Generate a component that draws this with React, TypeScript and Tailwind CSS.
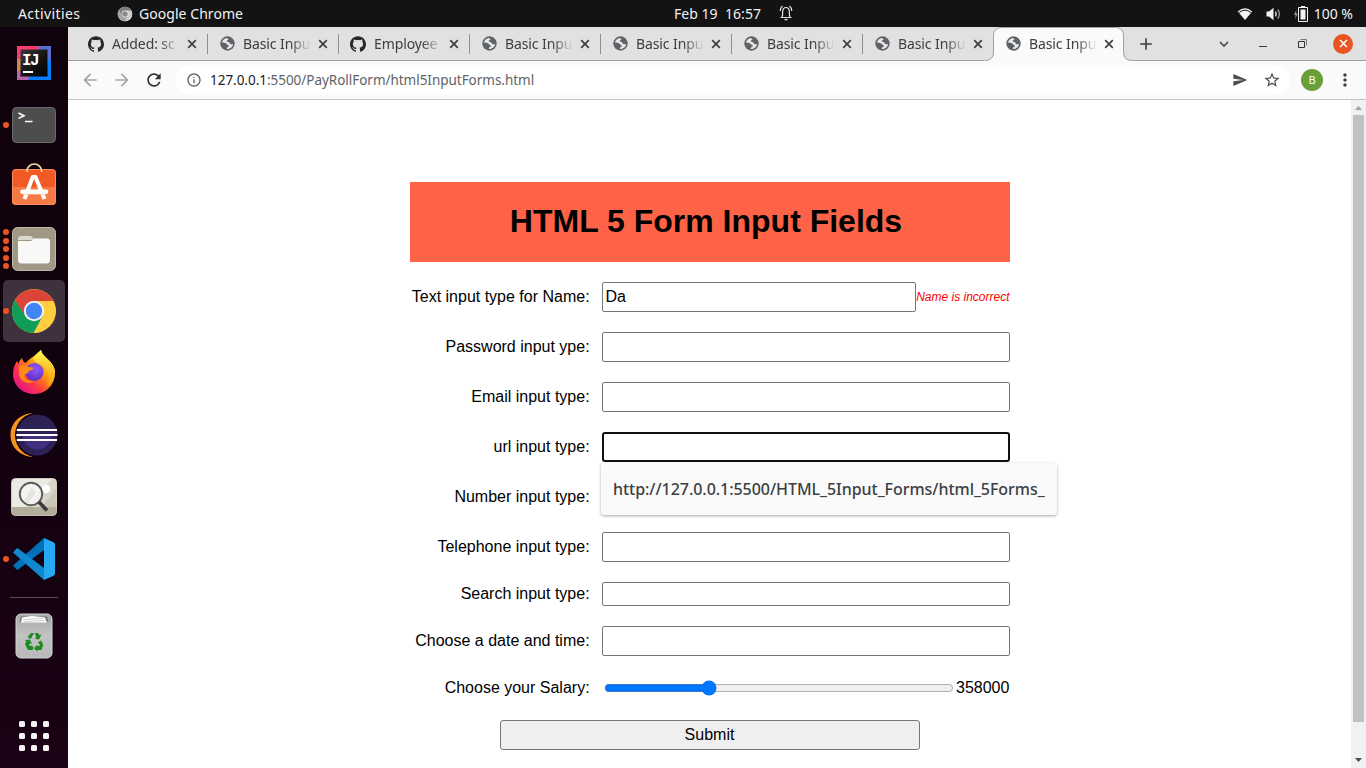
import React from 'react';
import { SiGithub } from 'react-icons/si';
import {
  MdAdd,
  MdArrowBack,
  MdArrowForward,
  MdExpandMore,
  MdInfoOutline,
  MdMoreVert,
  MdRefresh,
  MdSend,
  MdStarBorder,
} from 'react-icons/md';

const uiFont = "font-['Noto_Sans','Open_Sans',sans-serif]";
const formFont = "font-['Liberation_Sans',Arial,sans-serif]";

function ChromeGlyph({ mono = false }: { mono?: boolean }) {
  const c = mono
    ? { r: '#7d7d7d', y: '#cfcfcf', g: '#a4a4a4', b: '#8a8a8a', w: '#e8e8e8' }
    : { r: '#db4437', y: '#ffcd40', g: '#0f9d58', b: '#4285f4', w: '#f1f1f1' };
  return (
    <g>
      <circle cx="24" cy="24" r="22" fill={c.y} />
      <path d="M4.95 13 A22 22 0 0 1 43.05 13.5 L43 14 H24 L14.5 29.5 Z" fill={c.r} />
      <path d="M43.05 14 A22 22 0 0 1 24 46 L33 29 L24 14 Z" fill={c.y} />
      <path d="M4.95 13 A22 22 0 0 0 23.5 46 L32.7 29 L24 34 L15.3 29 Z" fill={c.g} />
      <circle cx="24" cy="24" r="10.2" fill={c.w} />
      <circle cx="24" cy="24" r="8.2" fill={c.b} />
    </g>
  );
}

function CrossIcon({ className }: { className: string }) {
  return (
    <svg className={className} width="10" height="10" viewBox="0 0 10 10" fill="none" stroke="currentColor" strokeWidth="1.700">
      <path d="M1.200 1.200 L8.800 8.800 M8.800 1.200 L1.200 8.800" />
    </svg>
  );
}

function GlobeIcon() {
  return (
    <svg className="relative ml-px shrink-0" width="15" height="15" viewBox="0 0 15 15">
      <circle cx="7.500" cy="7.500" r="7.200" fill="#5f6368" />
      <path
        d="M7 1.900 C4.500 2.100 2.300 4 1.900 6.600 C3.200 7 5 6.800 6.200 7.500 C7.500 8 7.200 9.300 8.800 9.400 C9.300 10.200 8.600 10.800 7.600 10.900 C7 11.200 7.200 12.200 6.600 13.100 C9.800 13.300 12.600 11 13.100 8.200 C12 8.300 10.800 8.500 10 7.800 C9.300 7.200 9.700 6.200 8.300 6 C7 6 6.600 5.400 6.900 4.600 C7.300 3.900 8.500 4.200 8.400 3.200 C8.300 2.500 7.500 2.600 7 1.900 Z"
        fill="#e8e8e8"
      />
    </svg>
  );
}

function IdeaIcon() {
  return (
    <svg width="48" height="48" viewBox="0 0 48 48">
      <rect x="7" y="7" width="34" height="34" fill="#8d63c0" />
      <path d="M7 7 H30 L22 24 L7 24 Z" fill="#fe3b6e" />
      <path d="M7 20 L16 20 L14 41 H7 Z" fill="#cf8a4c" />
      <path d="M7 33 L14 29 L20 41 H7 Z" fill="#b765ae" />
      <path d="M28 7 H41 V24 L33 20 Z" fill="#5b6fd0" />
      <path d="M41 20 V41 H18 L22 34 Z" fill="#087cfa" />
      <rect x="10.500" y="10.500" width="27" height="27" fill="url(#idea)" />
      <defs>
        <linearGradient id="idea" x1="0" y1="0" x2="1" y2="1">
          <stop offset="0" stopColor="#3a3a3a" />
          <stop offset=".6" stopColor="#111" />
          <stop offset="1" stopColor="#000" />
        </linearGradient>
      </defs>
      <text x="12" y="26" fill="#fff" fontSize="16" fontWeight="700" fontFamily="Liberation Mono" letterSpacing="-1.6">IJ</text>
      <rect x="13" y="32" width="10" height="2" fill="#fff" />
    </svg>
  );
}

function TerminalIcon() {
  return (
    <svg width="48" height="48" viewBox="0 0 48 48">
      <rect x="2.500" y="6.500" width="43" height="35" rx="4" fill="#4d4d4d" stroke="#6c6c6c" />
      <path d="M8.500 12 L14 14.700 L8.500 17.400" fill="none" stroke="#fff" strokeWidth="1.600" />
      <path d="M15 20.500 H22.500" stroke="#fff" strokeWidth="1.500" />
    </svg>
  );
}

function SoftwareIcon() {
  return (
    <svg width="48" height="48" viewBox="0 0 48 48">
      <rect x="2" y="6" width="44" height="36" rx="4" fill="#f15a24" />
      <path d="M2 24 H46 V38 a4 4 0 0 1 -4 4 H6 a4 4 0 0 1 -4 -4 Z" fill="#f47b45" />
      <rect x="2.500" y="6.500" width="43" height="35" rx="4" fill="none" stroke="#f58d60" />
      <path d="M17 9 V8 a7.300 7 0 0 1 14.600 0 V9" fill="none" stroke="#f9dca4" strokeWidth="1.600" />
      <path d="M14.500 36 L22.700 14 H25.500 L34.500 36" fill="none" stroke="#fff" strokeWidth="4" strokeLinejoin="round" />
      <path d="M12.500 28.700 H36" stroke="#fff" strokeWidth="4.600" strokeLinecap="round" />
      <path d="M13 31.300 H36" stroke="#f8c4ab" strokeWidth=".8" />
    </svg>
  );
}

function FilesIcon() {
  return (
    <svg width="48" height="48" viewBox="0 0 48 48">
      <rect x="2.500" y="2.500" width="43" height="43" rx="5" fill="#a09885" stroke="#beb8a7" />
      <path d="M8 14 a3 3 0 0 1 3 -3 H20 q2 0 3 2 L24 15 H8 Z" fill="#dcd8cb" />
      <path d="M8 16 H21 L24 13.500 H37 a3 3 0 0 1 3 3 V35 a3.500 3.500 0 0 1 -3.500 3.500 H11.500 A3.500 3.500 0 0 1 8 35 Z" fill="#f8f8f6" />
    </svg>
  );
}

function ChromeIcon() {
  return (
    <svg width="48" height="48" viewBox="0 0 48 48">
      <ChromeGlyph />
    </svg>
  );
}

function FirefoxIcon() {
  return (
    <svg width="48" height="48" viewBox="0 0 48 48">
      <defs>
        <linearGradient id="ffBody" x1=".9" y1=".1" x2=".15" y2=".9">
          <stop offset="0" stopColor="#fff44f" />
          <stop offset=".4" stopColor="#ff980e" />
          <stop offset=".7" stopColor="#ff3647" />
          <stop offset="1" stopColor="#e31587" />
        </linearGradient>
        <linearGradient id="ffTail" x1=".5" y1="0" x2=".5" y2="1">
          <stop offset="0" stopColor="#fff44f" />
          <stop offset="1" stopColor="#ff980e" />
        </linearGradient>
        <radialGradient id="ffGlobe" cx=".6" cy=".3" r=".8">
          <stop offset="0" stopColor="#9059ff" />
          <stop offset="1" stopColor="#5b2ab8" />
        </radialGradient>
      </defs>
      <path d="M12 9 C12.500 12 14 13 15.500 14 C21 8 27 6 31 1 C32 8 43 12 44.500 20 C47 34 37 45 24.500 45 C11 45 3 35 3 25 C3 19 5 15 7 12 L8.500 15 C9 12.500 10 11 12 9 Z" fill="url(#ffBody)" />
      <path d="M31 1 C32 8 43 11 45 22 C45 31 41 35 37 37 C42 28 37 17 29 15 C26 13 24 12 23 10 C24 6 28 4 31 1 Z" fill="url(#ffTail)" />
      <circle cx="24.500" cy="23" r="9" fill="url(#ffGlobe)" />
      <path d="M9 17 C14 15 17 17 18 18 C20 18 23 18 23.500 19 C23 21 20 21 18.500 22.500 C19 25 15 24 14.500 26 C15 31 20 33 25 32 C18 37 9 32 9 24 Z" fill="#ff8a16" />
    </svg>
  );
}

function EclipseIcon() {
  return (
    <svg width="48" height="48" viewBox="0 0 48 48">
      <path d="M23 2 C-7 4 -7 44 23 46 C-1 40 -1 8 23 2 Z" fill="#f7941e" />
      <circle cx="27" cy="24" r="20.500" fill="#2c2255" />
      <path d="M12.500 24 A14.500 14.500 0 0 0 41.500 24 Z" fill="#40307f" />
      <path d="M6.800 19 H47 M6.300 24 H47.500 M6.800 29 H47" stroke="#fff" strokeWidth="2.200" />
    </svg>
  );
}

function ImageViewerIcon() {
  return (
    <svg width="48" height="48" viewBox="0 0 48 48">
      <rect x="1.500" y="5.500" width="45" height="37" rx="4" fill="#ebeae3" stroke="#cdcabd" />
      <path d="M15 34 L42 6 a4.500 4.500 0 0 1 4.500 4 V34 Z" fill="#d9d7cb" />
      <path d="M31 34 L46 16 V34 Z" fill="#cbc8b9" />
      <path d="M1.500 34 H46.500 V39 a4 4 0 0 1 -4 3.500 H5.500 a4 4 0 0 1 -4 -4 Z" fill="#b3ad9c" />
      <circle cx="36" cy="16" r="4.300" fill="#fff" />
      <circle cx="21" cy="21" r="11.200" fill="#f6f6f4" fillOpacity=".85" stroke="#5b5b5b" strokeWidth="1.900" />
      <path d="M14 28 L22 14 L26 20 L18 30 Z" fill="#e6e5df" />
      <path d="M29 29 L37 37.500" stroke="#3b3b3b" strokeWidth="3.600" />
    </svg>
  );
}

function CodeIcon() {
  return (
    <svg width="48" height="48" viewBox="0 0 48 48">
      <path d="M34 3 L3 30.500 L6.500 34.500 Q7.500 35 8.500 34.300 L34 15 Z" fill="#0070b8" />
      <path d="M34 45 L3 17.500 L6.500 13.500 Q7.500 13 8.500 13.700 L34 33 Z" fill="#1187d0" />
      <path d="M34 3 L43.500 7.300 Q45 8 45 9.500 V38.500 Q45 40 43.500 40.700 L34 45 Z" fill="#27a8f2" />
    </svg>
  );
}

function TrashIcon() {
  return (
    <svg width="48" height="48" viewBox="0 0 48 48">
      <defs>
        <linearGradient id="bin" x1="0" y1="0" x2="0" y2="1">
          <stop offset="0" stopColor="#a9a9a9" />
          <stop offset=".5" stopColor="#c2c2c2" />
          <stop offset="1" stopColor="#b8b8b8" />
        </linearGradient>
      </defs>
      <rect x="6" y="2" width="36" height="44" rx="5" fill="url(#bin)" stroke="#d5d5d5" />
      <path d="M9.500 10 L11 4.500 H37 L38.500 10 Z" fill="#787878" />
      <path d="M11 10.500 L12 5.500 L22 4 L35 5.500 L37 10.500 Z" fill="#fff" />
      <path d="M13 7.500 L33 6.500 M14 9.500 L35 8.500" stroke="#bbb" strokeWidth=".7" />
      <g fill="#1f8a1f">
        <path d="M19.500 22.500 L21 21 H24 L20.800 27 L17.500 25.200 Z" />
        <path d="M24.800 21 H28 L29.500 23.300 L31.500 22.200 L29 27.500 L24.500 26.700 L26.300 25.600 Z" />
        <path d="M31 28.500 L33.300 32.800 L31.500 37.500 H28.500 L30 33 L27.800 30.200 Z" />
        <path d="M27.500 32.800 V34 H32 L31 38 H27.500 V39.500 L23.800 36.200 Z" />
        <path d="M23 34.200 V38 H18 L16.500 35 L17.800 33 Z" />
        <path d="M15 28 L19.800 27.500 L22 32 L20 31.200 L17 36 L15 32 L16.300 29.600 Z" />
      </g>
    </svg>
  );
}

type DockApp = { name: string; dots: number; active?: boolean; Icon: () => React.ReactElement };

const dockApps: DockApp[] = [
  { name: 'idea', dots: 0, Icon: IdeaIcon },
  { name: 'terminal', dots: 1, Icon: TerminalIcon },
  { name: 'software', dots: 0, Icon: SoftwareIcon },
  { name: 'files', dots: 5, Icon: FilesIcon },
  { name: 'chrome', dots: 1, active: true, Icon: ChromeIcon },
  { name: 'firefox', dots: 0, Icon: FirefoxIcon },
  { name: 'eclipse', dots: 0, Icon: EclipseIcon },
  { name: 'viewer', dots: 0, Icon: ImageViewerIcon },
  { name: 'code', dots: 1, Icon: CodeIcon },
];

function DockItem({ dots, active, Icon }: DockApp) {
  return (
    <div className={`mx-[3px] flex h-[62px] shrink-0 items-center rounded-[5px] ${active ? 'bg-[#3f313e]' : ''}`}>
      <div className="flex w-[7px] flex-col items-start gap-[2.5px]">
        {Array.from({ length: dots }, (_, i) => (
          <span key={i} className="size-[6px] rounded-full bg-[#e95420]" />
        ))}
      </div>
      <Icon />
    </div>
  );
}

function Dock() {
  return (
    <nav className="flex w-[68px] shrink-0 flex-col bg-linear-to-b from-[#10020c] via-[#12010e] to-[#1b0216] pt-[5px]">
      {dockApps.map((app) => (
        <DockItem key={app.name} {...app} />
      ))}
      <div className="mx-[10px] mt-[7px] mb-[7px] h-px shrink-0 bg-[#5c4d58]" />
      <DockItem name="trash" dots={0} Icon={TrashIcon} />
      <div className="mx-auto mt-[54px] grid grid-cols-3 gap-[6px]">
        {Array.from({ length: 9 }, (_, i) => (
          <span key={i} className="size-[6px] rounded-[1.5px] bg-[#f2f2f2]" />
        ))}
      </div>
    </nav>
  );
}

function TopBar() {
  return (
    <header className={`flex h-[27px] shrink-0 items-center bg-[#131313] text-[14px] text-[#f2f2f2] ${uiFont}`}>
      <div className="flex w-[674px] items-center pl-[18px]">
        <span className="w-[99px] tracking-[0.4px]">Activities</span>
        <svg width="16" height="16" viewBox="0 0 48 48">
          <ChromeGlyph mono />
        </svg>
        <span className="ml-[6px] tracking-[0.05px]">Google Chrome</span>
      </div>
      <div className="flex w-[120px] items-center pb-px whitespace-pre">
        <span className="w-[105px] shrink-0 tracking-[0.04px]">Feb 19  16:57</span>
        <svg className="shrink-0" width="14" height="16" viewBox="0 0 14 16" fill="none" stroke="#e6e6e6" strokeWidth="1.200">
          <path d="M1.500 12.500 H12.500 M3 12 C4 10 3.500 8 3.700 6 C4 3.600 5.500 2.500 7 2.500 S10 3.600 10.300 6 C10.500 8 10 10 11 12" />
          <path d="M5.500 14.600 H8.500 M1.200 6 Q1.500 2.500 3.500 1 M12.800 6 Q12.500 2.500 10.500 1" />
        </svg>
      </div>
      <div className="flex flex-1 items-center justify-end pr-[13px]">
        <svg width="16" height="14" viewBox="0 0 16 14">
          <path d="M.8 4.500 Q8 -1.800 15.200 4.500 L8 13 Z" fill="#f2f2f2" />
          <path d="M2.200 5.500 Q8 .8 13.800 5.500" fill="none" stroke="#131313" strokeWidth="1" />
        </svg>
        <svg className="ml-[13px]" width="16" height="14" viewBox="0 0 16 14" fill="none">
          <path d="M.5 4.500 H3 L7.500 .7 V13.300 L3 9.500 H.5 Z" fill="#f2f2f2" />
          <path d="M9.500 4.700 Q11 7 9.500 9.300" stroke="#f2f2f2" strokeWidth="1.300" />
          <path d="M11.800 2.500 Q15 7 11.800 11.500" stroke="#9c9c9c" strokeWidth="1.300" />
        </svg>
        <svg className="ml-[11px]" width="16" height="16" viewBox="0 0 16 16" fill="none">
          <path d="M3.500 3.500 L1 9 H2.700 L2 13 L4.800 7.500 H3 Z" fill="#9a9a9a" />
          <path d="M8 .5 H12 M5.500 1.500 H14.500 V15.500 H5.500 Z" stroke="#f2f2f2" />
          <path d="M7.500 3.500 H12.500 V13.500 H7.500 Z" fill="#f2f2f2" />
        </svg>
        <span className="ml-[5px]">100 %</span>
      </div>
    </header>
  );
}

const tabs = [
  { title: 'Added: sc', github: true },
  { title: 'Basic Inpu', github: false },
  { title: 'Employee', github: true },
  { title: 'Basic Inpu', github: false },
  { title: 'Basic Inpu', github: false },
  { title: 'Basic Inpu', github: false },
  { title: 'Basic Inpu', github: false },
  { title: 'Basic Inpu', github: false },
];

function TabStrip() {
  return (
    <div className={`flex h-[34px] shrink-0 items-stretch border-b border-[#a0a0a0] bg-[#e1e1e1] pl-[9px] ${uiFont}`}>
      {tabs.map((tab, i) => {
        const active = i === tabs.length - 1;
        return (
          <div key={i} className="relative flex w-[131px] shrink-0 items-center pl-[11px]">
            {active && (
              <svg className="absolute top-0 left-[-10px]" width="150" height="34" viewBox="0 0 150 34">
                <path d="M0 34 V33.500 H1 Q9.500 33.500 9.500 25 V8.500 Q9.500 .5 17.500 .5 H131.500 Q139.500 .5 139.500 8.500 V25 Q139.500 33.500 148 33.500 H149 V34 Z" fill="#fafafa" />
                <path d="M1 33.500 Q9.500 33.500 9.500 25 V8.500 Q9.500 .5 17.500 .5 H131.500 Q139.500 .5 139.500 8.500 V25 Q139.500 33.500 148 33.500" fill="none" stroke="#a0a0a0" />
              </svg>
            )}
            {tab.github ? <SiGithub className="relative size-4 shrink-0 text-[#24292e]" /> : <GlobeIcon />}
            <span className="relative ml-2 w-[68px] shrink-0 mask-r-from-70% mask-r-to-100% pb-px text-[14px] tracking-[-0.1px] whitespace-nowrap text-[#3c4043]">
              {tab.title}
            </span>
            <CrossIcon className="relative mr-[2px] ml-[7px] shrink-0 text-[#3c4043]" />
            {i < 6 && <span className="ml-auto h-[20px] w-px bg-[#8f8f8f]" />}
          </div>
        );
      })}
      <div className="flex flex-1 items-center text-[#3c4043]">
        <MdAdd className="ml-[11px] size-[20px]" />
        <MdExpandMore className="ml-[59px] size-[18px]" />
        <svg className="ml-[25px]" width="10" height="10" viewBox="0 0 10 10">
          <path d="M1 7.500 H9" stroke="#3c3c3c" />
        </svg>
        <svg className="ml-[30px]" width="9" height="9" viewBox="0 0 9 9" fill="none">
          <path d="M2.500 .5 H8.500 V6.500" stroke="#777" />
          <path d="M.5 2.500 H6.500 V8.500 H.5 Z" stroke="#333" strokeWidth="1" />
        </svg>
        <span className="ml-[26px] flex size-[20px] items-center justify-center rounded-full bg-[#e95420]">
          <CrossIcon className="size-[9px] text-white" />
        </span>
      </div>
    </div>
  );
}

function Toolbar() {
  return (
    <div className={`flex h-[39px] shrink-0 items-center border-b border-[#c4c4c4] bg-[#fafafa] ${uiFont}`}>
      <MdArrowBack className="ml-[12px] size-[20px] text-[#a5a5a5]" />
      <MdArrowForward className="ml-[12px] size-[20px] text-[#a5a5a5]" />
      <MdRefresh className="ml-[12px] size-[20px] text-[#2d3033]" />
      <div className="ml-[12px] flex h-[30px] w-[1114px] items-center rounded-full bg-white pr-[9px] pl-[10px]">
        <MdInfoOutline className="size-[16px] text-[#5f6368]" />
        <span className="ml-[8px] flex-1 text-[13.5px] tracking-[-0.03px] text-[#5f6368]">
          <span className="text-[#202124]">127.0.0.1</span>:5500/PayRollForm/html5InputForms.html
        </span>
        <MdSend className="size-[16px] text-[#4a4d51]" />
        <MdStarBorder className="ml-[15px] size-[18px] text-[#4a4d51]" />
      </div>
      <span className="ml-[11px] flex size-[22px] items-center justify-center rounded-full bg-[#689f38] text-[11px] text-white">
        B
      </span>
      <MdMoreVert className="ml-[12px] size-[20px] text-[#3c4043]" />
    </div>
  );
}

const box = 'w-full rounded-[2px] border border-[#767676] bg-white px-[2.5px] text-[16px] outline-none';

function Row({ label, height = 'h-[30px]', children }: { label: string; height?: string; children: React.ReactNode }) {
  return (
    <div className={`flex items-center ${height}`}>
      <label className="w-[179.6px] shrink-0 text-right whitespace-nowrap">{label}</label>
      <div className="ml-[12.4px] flex h-full flex-1 items-center">{children}</div>
    </div>
  );
}

function FormPage() {
  return (
    <main className={`flex-1 bg-white pl-[342px] text-[16px] leading-[18px] text-black ${formFont}`}>
      <form className="mt-[82px] flex w-[600px] flex-col gap-5">
        <h1 className="flex h-[80px] items-center justify-center bg-[#ff6347] pr-[8px] pb-[2px] text-[32px] font-bold">
          HTML 5 Form Input Fields
        </h1>
        <Row label="Text input type for Name:">
          <input className={`${box} h-full min-w-0 flex-1`} type="text" defaultValue="Da" />
          <span className="w-[94px] pl-[0.2px] text-[12px] whitespace-nowrap text-[#ff0000] italic">Name is incorrect</span>
        </Row>
        <Row label="Password input ype:">
          <input className={`${box} h-full`} type="password" />
        </Row>
        <Row label="Email input type:">
          <input className={`${box} h-full`} type="email" />
        </Row>
        <Row label="url input type:">
          <div className="relative size-full">
            <input className="block size-full rounded-[3px] border-2 border-[#101010] bg-white px-[3px] outline-none" type="url" />
            <div
              className={`absolute top-[31px] left-[-1px] z-10 flex h-[52px] w-[456px] items-center rounded-[3px] bg-[#fafafa] pl-[12px] text-[16px] font-medium tracking-[-0.04px] whitespace-nowrap text-[#3c4043] shadow-[0_1px_3px_rgba(0,0,0,0.35)] ${uiFont}`}
            >
              http://127.0.0.1:5500/HTML_5Input_Forms/html_5Forms_
            </div>
          </div>
        </Row>
        <Row label="Number input type:">
          <input className={`${box} h-full`} type="number" />
        </Row>
        <Row label="Telephone input type:">
          <input className={`${box} h-full`} type="tel" />
        </Row>
        <Row label="Search input type:" height="h-[24px]">
          <input className={`${box} h-full`} type="search" />
        </Row>
        <Row label="Choose a date and time:">
          <input className={`${box} h-full`} type="text" />
        </Row>
        <Row label="Choose your Salary:" height="h-[24px]">
          <input className="m-[2px] h-4 w-[350px] shrink-0" type="range" min={300000} max={500000} step={100} defaultValue={358000} />
          <output>358000</output>
        </Row>
        <button type="button" className="mx-auto h-[30px] w-[420px] shrink-0 rounded-[3px] border border-[#767676] bg-[#efefef] pr-px">
          Submit
        </button>
      </form>
    </main>
  );
}

function Scrollbar() {
  return (
    <div className="flex w-[15px] shrink-0 flex-col items-center bg-[#f1f1f1]">
      <svg className="shrink-0" width="15" height="15" viewBox="0 0 15 15">
        <path d="M4 10 L7.500 6 L11 10 Z" fill="#a3a3a3" />
      </svg>
      <div className="h-[607px] w-[11px] shrink-0 bg-[#c1c1c1]" />
      <svg className="mt-auto shrink-0" width="15" height="15" viewBox="0 0 15 15">
        <path d="M4 5 L7.500 9 L11 5 Z" fill="#505050" />
      </svg>
    </div>
  );
}

export default function App() {
  return (
    <div className="flex h-[768px] w-[1366px] flex-col overflow-hidden">
      <TopBar />
      <div className="flex min-h-0 flex-1">
        <Dock />
        <div className="flex min-w-0 flex-1 flex-col">
          <TabStrip />
          <Toolbar />
          <div className="flex min-h-0 flex-1">
            <FormPage />
            <Scrollbar />
          </div>
        </div>
      </div>
    </div>
  );
}
